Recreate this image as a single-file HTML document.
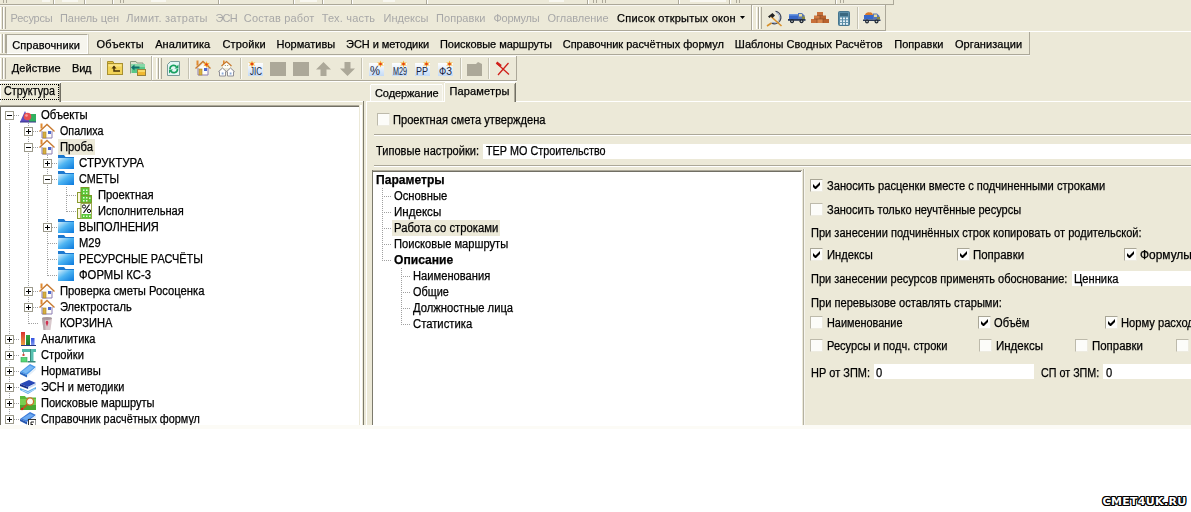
<!DOCTYPE html>
<html lang="ru"><head><meta charset="utf-8"><title>Параметры</title><style>
html,body{margin:0;padding:0}
body{width:1191px;height:512px;overflow:hidden;background:#fff;position:relative;font-family:"Liberation Sans",sans-serif}
#r{position:absolute;left:0;top:0;width:1191px;height:512px;overflow:hidden;background:#fff}
#r div,#r span,#r svg{position:absolute}
.t,.m,.b,.g,.mb{filter:grayscale(1);-webkit-text-stroke:.25px}
.t,.m,.b,.g{white-space:nowrap;height:16px;line-height:16px;color:#000}
.t{font-size:11px}
.g{font-size:11px;color:#ACA899;-webkit-text-stroke:0}
.m{font-size:12px}
.b{font-size:11px;font-weight:bold}
.mb{font-size:12px;font-weight:bold;white-space:nowrap;height:16px;line-height:16px;color:#000}
.wm{font-family:'DejaVu Sans',sans-serif;font-size:11px;font-weight:bold;white-space:nowrap;height:16px;line-height:16px;color:#fff;-webkit-text-stroke:0;text-shadow:-1px -1px 0 #000,1px -1px 0 #000,-1px 1px 0 #000,1px 1px 0 #000,0 -1px 0 #000,0 1px 0 #000,-1px 0 0 #000,1px 0 0 #000}
</style></head><body><div id="r"><div style="left:0px;top:0px;width:1191px;height:425px;background:#ECE9D8;"></div><div style="left:0px;top:425px;width:1191px;height:4px;background:#FCFBF6;"></div><div style="left:0px;top:4px;width:894px;height:1px;background:#ACA899;"></div><div style="left:893px;top:0px;width:1px;height:4px;background:#ACA899;"></div><div style="left:3px;top:0px;width:1px;height:3px;background:#ACA899;"></div><div style="left:6px;top:0px;width:1px;height:3px;background:#ACA899;"></div><div style="left:120px;top:0px;width:1px;height:3px;background:#ACA899;"></div><div style="left:123px;top:0px;width:1px;height:3px;background:#ACA899;"></div><div style="left:593px;top:0px;width:1px;height:3px;background:#ACA899;"></div><div style="left:596px;top:0px;width:1px;height:3px;background:#ACA899;"></div><div style="left:602px;top:0px;width:1px;height:3px;background:#ACA899;"></div><div style="left:605px;top:0px;width:1px;height:3px;background:#ACA899;"></div><div style="left:736px;top:0px;width:1px;height:3px;background:#ACA899;"></div><div style="left:739px;top:0px;width:1px;height:3px;background:#ACA899;"></div><div style="left:840px;top:0px;width:1px;height:3px;background:#ACA899;"></div><div style="left:843px;top:0px;width:1px;height:3px;background:#ACA899;"></div><div style="left:53px;top:0px;width:1px;height:4px;background:#ACA899;"></div><div style="left:54px;top:0px;width:1px;height:4px;background:#FFFFFF;"></div><div style="left:84px;top:0px;width:1px;height:4px;background:#ACA899;"></div><div style="left:85px;top:0px;width:1px;height:4px;background:#FFFFFF;"></div><div style="left:112px;top:0px;width:1px;height:4px;background:#ACA899;"></div><div style="left:113px;top:0px;width:1px;height:4px;background:#FFFFFF;"></div><div style="left:218px;top:0px;width:1px;height:4px;background:#ACA899;"></div><div style="left:219px;top:0px;width:1px;height:4px;background:#FFFFFF;"></div><div style="left:293px;top:0px;width:1px;height:4px;background:#ACA899;"></div><div style="left:294px;top:0px;width:1px;height:4px;background:#FFFFFF;"></div><div style="left:322px;top:0px;width:1px;height:4px;background:#ACA899;"></div><div style="left:323px;top:0px;width:1px;height:4px;background:#FFFFFF;"></div><div style="left:351px;top:0px;width:1px;height:4px;background:#ACA899;"></div><div style="left:352px;top:0px;width:1px;height:4px;background:#FFFFFF;"></div><div style="left:426px;top:0px;width:1px;height:4px;background:#ACA899;"></div><div style="left:427px;top:0px;width:1px;height:4px;background:#FFFFFF;"></div><div style="left:587px;top:0px;width:1px;height:4px;background:#ACA899;"></div><div style="left:588px;top:0px;width:1px;height:4px;background:#FFFFFF;"></div><div style="left:678px;top:0px;width:1px;height:4px;background:#ACA899;"></div><div style="left:679px;top:0px;width:1px;height:4px;background:#FFFFFF;"></div><div style="left:729px;top:0px;width:1px;height:4px;background:#ACA899;"></div><div style="left:730px;top:0px;width:1px;height:4px;background:#FFFFFF;"></div><div style="left:835px;top:0px;width:1px;height:4px;background:#ACA899;"></div><div style="left:836px;top:0px;width:1px;height:4px;background:#FFFFFF;"></div><div style="left:42px;top:0px;width:8px;height:2px;background:#F8F7F0;"></div><div style="left:62px;top:0px;width:16px;height:2px;background:#F8F7F0;"></div><div style="left:151px;top:0px;width:15px;height:2px;background:#F8F7F0;"></div><div style="left:300px;top:0px;width:17px;height:2px;background:#F8F7F0;"></div><div style="left:383px;top:0px;width:12px;height:2px;background:#F8F7F0;"></div><div style="left:549px;top:0px;width:15px;height:2px;background:#F8F7F0;"></div><div style="left:690px;top:0px;width:36px;height:2px;background:#F8F7F0;"></div><div style="left:0px;top:5px;width:751px;height:1px;background:#F8F7F1;"></div><div style="left:0px;top:30px;width:752px;height:1px;background:#ACA899;"></div><div style="left:751px;top:5px;width:1px;height:26px;background:#ACA899;"></div><div style="left:752px;top:5px;width:1px;height:25px;background:#FFFFFF;"></div><div style="left:752px;top:5px;width:133px;height:1px;background:#F8F7F1;"></div><div style="left:752px;top:30px;width:134px;height:1px;background:#ACA899;"></div><div style="left:885px;top:5px;width:1px;height:26px;background:#ACA899;"></div><div style="left:0px;top:31px;width:1191px;height:1px;background:#FFFFFF;"></div><div style="left:0px;top:7px;width:1px;height:22px;background:#FFFFFF;"></div><div style="left:2px;top:7px;width:1px;height:22px;background:#ACA899;"></div><div style="left:3px;top:7px;width:1px;height:22px;background:#FFFFFF;"></div><div style="left:5px;top:7px;width:1px;height:22px;background:#ACA899;"></div><span id="t0" class="g" style="left:10.5px;top:10px;letter-spacing:-0.196px;">Ресурсы</span><span id="t1" class="g" style="left:60px;top:10px;letter-spacing:-0.044px;">Панель цен</span><span id="t2" class="g" style="left:126.2px;top:10px;letter-spacing:0.264px;">Лимит. затраты</span><span id="t3" class="g" style="left:215.5px;top:10px;letter-spacing:-0.832px;">ЭСН</span><span id="t4" class="g" style="left:243.8px;top:10px;letter-spacing:0.146px;">Состав работ</span><span id="t5" class="g" style="left:321.7px;top:10px;letter-spacing:0.188px;">Тех. часть</span><span id="t6" class="g" style="left:383.5px;top:10px;letter-spacing:0.020px;">Индексы</span><span id="t7" class="g" style="left:436px;top:10px;letter-spacing:0.059px;">Поправки</span><span id="t8" class="g" style="left:493.5px;top:10px;letter-spacing:-0.296px;">Формулы</span><span id="t9" class="g" style="left:547.5px;top:10px;letter-spacing:-0.033px;">Оглавление</span><span id="t10" class="t" style="left:617.1px;top:10px;letter-spacing:0.227px;">Список открытых окон</span><svg style="left:740px;top:16px" width="5" height="3" viewBox="0 0 5 3"><path d="M0 0h5L2.5 3z" fill="#000"/></svg><div style="left:756px;top:7px;width:1px;height:22px;background:#FFFFFF;"></div><div style="left:758px;top:7px;width:1px;height:22px;background:#ACA899;"></div><div style="left:759px;top:7px;width:1px;height:22px;background:#FFFFFF;"></div><div style="left:761px;top:7px;width:1px;height:22px;background:#ACA899;"></div><div style="left:857px;top:7px;width:1px;height:22px;background:#C5C2B2;"></div><div style="left:858px;top:7px;width:1px;height:22px;background:#FAF9F3;"></div><svg style="left:766px;top:10px" width="17" height="17" viewBox="0 0 17 17"><path d="M9.500 1.200C14.500 2 16.500 7.500 13.500 11.500 11.500 14 8 14.500 5.500 13" fill="none" stroke="#3C4458" stroke-width="1.100"/><path d="M10 2.500C13.500 4 14.500 8 12.500 10.500 11 12.500 8.500 13 6.500 12.300" fill="none" stroke="#9FB4D8" stroke-width="1"/><path d="M5.500 13L1 16" stroke="#D8902A" stroke-width="1.600"/><path d="M5 6.500L15.500 16" stroke="#D8902A" stroke-width="1.600"/><path d="M2 6.500L6.500 3l2.500 2.500L6.500 8 5 6.500 3.500 8z" fill="#222"/></svg><svg style="left:788px;top:13px" width="18" height="11" viewBox="0 0 18 11"><rect x="1" y="1" width="9" height="5" fill="#3868C8"/><rect x="1" y="1" width="9" height="1.500" fill="#6C98E0"/><path d="M10 0h4l2.500 2.500V6H10z" fill="#5878B8"/><rect x="11" y="1" width="3" height="2.500" fill="#E8DC98"/><rect x="14" y="3.500" width="3" height="3" fill="#8A8A40"/><rect x="0" y="6" width="17.500" height="1.800" fill="#283858"/><circle cx="4" cy="8.200" r="2" fill="#202830"/><circle cx="13.500" cy="8.200" r="2" fill="#202830"/><circle cx="4" cy="8.200" r=".8" fill="#C8D0D8"/><circle cx="13.500" cy="8.200" r=".8" fill="#C8D0D8"/></svg><svg style="left:811px;top:12px" width="18" height="12" viewBox="0 0 18 12"><rect x="6" y="0" width="6" height="3.5" fill="#C8703A"/><rect x="3" y="3.5" width="6" height="3.5" fill="#D07A42"/><rect x="9" y="3.5" width="6" height="3.5" fill="#B9632F"/><rect x="0" y="7" width="6" height="4" fill="#C8703A"/><rect x="6" y="7" width="6" height="4" fill="#D9884E"/><rect x="12" y="7" width="6" height="4" fill="#B9632F"/><path d="M6 3.5h6M3 7h12M9 3.5v3.5M6 7v4M12 7v4" stroke="#8C4A22" stroke-width=".7"/></svg><svg style="left:838px;top:11px" width="12" height="15" viewBox="0 0 12 15"><rect x=".5" y=".5" width="11" height="14" rx="1" fill="#5B8EA8" stroke="#47768E"/><rect x="2" y="2" width="8" height="3" fill="#3A6880"/><g fill="#E4F0F6"><rect x="2" y="6.500" width="2" height="1.800"/><rect x="5" y="6.500" width="2" height="1.800"/><rect x="8" y="6.500" width="2" height="1.800"/><rect x="2" y="9.300" width="2" height="1.800"/><rect x="5" y="9.300" width="2" height="1.800"/><rect x="8" y="9.300" width="2" height="1.800"/><rect x="2" y="12" width="2" height="1.800"/><rect x="5" y="12" width="2" height="1.800"/><rect x="8" y="12" width="2" height="1.800"/></g></svg><svg style="left:863px;top:12px" width="18" height="12" viewBox="0 0 18 12"><path d="M2 3c.5-2 2.500-3 4.500-2.500C8 0 9.500 1 10 3z" fill="#D87828"/><rect x="1" y="3" width="9" height="4.500" fill="#3868C8"/><path d="M10 1.500h4l2.500 2.500V7.500H10z" fill="#5878B8"/><rect x="11" y="2.500" width="3" height="2.500" fill="#E8DC98"/><rect x="14" y="5" width="3" height="2.500" fill="#8A8A40"/><rect x="0" y="7.500" width="17.500" height="1.500" fill="#283858"/><circle cx="4" cy="9.500" r="2" fill="#202830"/><circle cx="13.500" cy="9.500" r="2" fill="#202830"/><circle cx="4" cy="9.500" r=".8" fill="#C8D0D8"/><circle cx="13.500" cy="9.500" r=".8" fill="#C8D0D8"/></svg><div style="left:0px;top:54px;width:1030px;height:1px;background:#ACA899;"></div><div style="left:1029px;top:32px;width:1px;height:23px;background:#ACA899;"></div><div style="left:0px;top:55px;width:1030px;height:1px;background:#F8F7F1;"></div><div style="left:0px;top:34px;width:1px;height:19px;background:#FFFFFF;"></div><div style="left:2px;top:34px;width:1px;height:19px;background:#ACA899;"></div><div style="left:3px;top:34px;width:1px;height:19px;background:#FFFFFF;"></div><div style="left:5px;top:34px;width:1px;height:19px;background:#ACA899;"></div><div style="left:6px;top:34px;width:82px;height:20px;background:#F6F5EE;box-sizing:border-box;border-top:1px solid #ACA899;border-left:1px solid #ACA899;border-right:1px solid #fff;border-bottom:1px solid #fff"></div><div style="left:88px;top:34px;width:1px;height:20px;background:#CFCCBD;"></div><span id="t11" class="t" style="left:12.3px;top:37px;letter-spacing:0.087px;">Справочники</span><span id="t12" class="t" style="left:96.5px;top:36px;letter-spacing:0.318px;">Объекты</span><span id="t13" class="t" style="left:155.2px;top:36px;letter-spacing:0.072px;">Аналитика</span><span id="t14" class="t" style="left:222.5px;top:36px;letter-spacing:0.125px;">Стройки</span><span id="t15" class="t" style="left:276.5px;top:36px;letter-spacing:0.026px;">Нормативы</span><span id="t16" class="t" style="left:346.1px;top:36px;letter-spacing:-0.056px;">ЭСН и методики</span><span id="t17" class="t" style="left:440px;top:36px;letter-spacing:-0.045px;">Поисковые маршруты</span><span id="t18" class="t" style="left:562.7px;top:36px;">Справочник расчётных формул</span><span id="t19" class="t" style="left:734.8px;top:36px;letter-spacing:0.013px;">Шаблоны Сводных Расчётов</span><span id="t20" class="t" style="left:894.2px;top:36px;letter-spacing:0.034px;">Поправки</span><span id="t21" class="t" style="left:955px;top:36px;letter-spacing:0.068px;">Организации</span><div style="left:0px;top:56px;width:151px;height:1px;background:#FFFFFF;"></div><div style="left:0px;top:80px;width:152px;height:1px;background:#ACA899;"></div><div style="left:151px;top:56px;width:1px;height:25px;background:#BAB7A8;"></div><div style="left:152px;top:56px;width:1px;height:24px;background:#FFFFFF;"></div><div style="left:152px;top:56px;width:364px;height:1px;background:#FFFFFF;"></div><div style="left:152px;top:80px;width:365px;height:1px;background:#ACA899;"></div><div style="left:516px;top:56px;width:1px;height:25px;background:#ACA899;"></div><div style="left:0px;top:81px;width:517px;height:1px;background:#FFFFFF;"></div><div style="left:0px;top:58px;width:1px;height:21px;background:#FFFFFF;"></div><div style="left:2px;top:58px;width:1px;height:21px;background:#ACA899;"></div><div style="left:3px;top:58px;width:1px;height:21px;background:#FFFFFF;"></div><div style="left:5px;top:58px;width:1px;height:21px;background:#ACA899;"></div><span id="t22" class="t" style="left:11.7px;top:60px;letter-spacing:0.080px;">Действие</span><span id="t23" class="t" style="left:72.1px;top:60px;letter-spacing:-0.302px;">Вид</span><div style="left:100px;top:58px;width:1px;height:21px;background:#C5C2B2;"></div><div style="left:101px;top:58px;width:1px;height:21px;background:#FAF9F3;"></div><div style="left:156px;top:58px;width:1px;height:21px;background:#FFFFFF;"></div><div style="left:158px;top:58px;width:1px;height:21px;background:#ACA899;"></div><div style="left:159px;top:58px;width:1px;height:21px;background:#FFFFFF;"></div><div style="left:161px;top:58px;width:1px;height:21px;background:#ACA899;"></div><div style="left:188px;top:58px;width:1px;height:21px;background:#C5C2B2;"></div><div style="left:189px;top:58px;width:1px;height:21px;background:#FAF9F3;"></div><div style="left:240px;top:58px;width:1px;height:21px;background:#C5C2B2;"></div><div style="left:241px;top:58px;width:1px;height:21px;background:#FAF9F3;"></div><div style="left:361px;top:58px;width:1px;height:21px;background:#C5C2B2;"></div><div style="left:362px;top:58px;width:1px;height:21px;background:#FAF9F3;"></div><div style="left:460px;top:58px;width:1px;height:21px;background:#C5C2B2;"></div><div style="left:461px;top:58px;width:1px;height:21px;background:#FAF9F3;"></div><div style="left:488px;top:58px;width:1px;height:21px;background:#C5C2B2;"></div><div style="left:489px;top:58px;width:1px;height:21px;background:#FAF9F3;"></div><svg style="left:107px;top:61px" width="16" height="15" viewBox="0 0 16 15"><path d="M.5 2.500V.5h5.500l1 2z" fill="#E8C848" stroke="#A89030" stroke-width="1"/><rect x=".5" y="2.500" width="15" height="11" fill="#F2D458" stroke="#A89030" stroke-width="1"/><rect x="1.500" y="3.500" width="13" height="2" fill="#F8E488"/><path d="M13 10H7V5.500" fill="none" stroke="#4A3408" stroke-width="1.500"/><path d="M4.500 7.500L7 4.500l2.500 3z" fill="#4A3408"/></svg><svg style="left:130px;top:61px" width="16" height="15" viewBox="0 0 16 15"><path d="M.5 12.500V.5h5.500l1 1.500h6v2" fill="#DCE4D0" stroke="#8A9A80" stroke-width="1"/><rect x="1.500" y="3" width="13.500" height="9" fill="#58C888"/><rect x="1.500" y="3" width="13.500" height="3" fill="#88D8A8"/><path d="M9.500 6.500H3.500" stroke="#0E706C" stroke-width="2"/><path d="M1 6.500L4.500 3.500v6z" fill="#0E706C"/><rect x="7.500" y="8.500" width="8" height="6" fill="#F0B830" stroke="#98803A" stroke-width="1"/><rect x="8" y="9" width="7" height="2" fill="#F8D868"/></svg><svg style="left:166px;top:61px" width="15" height="15" viewBox="0 0 15 15"><path d="M4.500.5H13.500V14.500H1.500V3.500z" fill="#E4F6F4" stroke="#7A9A98" stroke-width="1"/><path d="M4 8A3.600 3.600 0 0 1 10.500 5.800" fill="none" stroke="#18A060" stroke-width="1.700"/><path d="M11.500 8A3.600 3.600 0 0 1 5 10.200" fill="none" stroke="#18A060" stroke-width="1.700"/><path d="M12.500 3.500v4h-4z" fill="#18A060"/><path d="M3 12.500v-4h4z" fill="#18A060"/></svg><svg style="left:195px;top:60px" width="17" height="17" viewBox="0 0 17 17"><rect x="1.500" y="0.500" width="2" height="5" fill="#E08A30"/><path d="M3 8.500v6.500h10V8.500L8 4z" fill="#FEFDF8"/><path d="M3 8v7h10V8" fill="none" stroke="#8C7CB4" stroke-width="1"/><path d="M.5 8.500L8 1.500l7.500 7" fill="none" stroke="#C87A30" stroke-width="1.400"/><rect x="4" y="9" width="3" height="6" fill="#D8B040" stroke="#A8842A" stroke-width=".6"/><rect x="9" y="8" width="3" height="3" fill="#4A68D0"/><g transform="translate(11.500 4.500)"><path d="M0-3.500L.9-1.200 3.300-1.800 1.700 0 3.300 1.800.9 1.200 0 3.500-.9 1.200-3.300 1.800-1.700 0-3.300-1.800-.9-1.200z" fill="#F7B030"/><circle r="1.300" fill="#E4401C"/></g></svg><svg style="left:218px;top:60px" width="17" height="17" viewBox="0 0 17 17"><rect x="5" y=".5" width="1.600" height="3.500" fill="#E08A30"/><path d="M5 8V5l3.500-3 3.500 3v3z" fill="#FEFDF8"/><path d="M3.500 6L8.500 1.500 13.500 6" fill="none" stroke="#C87A30" stroke-width="1.300"/><circle cx="7.300" cy="5.500" r=".6" fill="#886"/><circle cx="9.700" cy="5.500" r=".6" fill="#886"/><path d="M1.500 11.500V16h6v-4.500L4.500 8.500z" fill="#fff"/><path d="M.3 11.800L4.500 8l4.200 3.800M1.500 11.500V16h6v-4.500" fill="none" stroke="#8E8E96" stroke-width="1"/><path d="M9.500 11.500V16h6v-4.500L12.500 8.500z" fill="#fff"/><path d="M8.300 11.800L12.500 8l4.200 3.800M9.500 11.500V16h6v-4.500" fill="none" stroke="#8E8E96" stroke-width="1"/><rect x="3.700" y="12.500" width="1.800" height="2" fill="#88A8D8"/><rect x="11.700" y="12.500" width="1.800" height="2" fill="#88A8D8"/></svg><svg style="left:247px;top:60px" width="17" height="17" viewBox="0 0 17 17"><rect x="1" y="3" width="15" height="13" fill="url(#dg)"/><text x="3" y="14.500" font-family="Liberation Sans,sans-serif" font-size="10" textLength="12" lengthAdjust="spacingAndGlyphs" fill="#141E40">JIC</text><g transform="translate(5 4)"><path d="M0-3.500L.9-1.200 3.300-1.800 1.700 0 3.300 1.800.9 1.200 0 3.500-.9 1.200-3.300 1.800-1.700 0-3.300-1.800-.9-1.200z" fill="#F7B030"/><circle r="1.300" fill="#E4401C"/></g></svg><div style="left:270px;top:62px;width:16px;height:14px;background:#ACA899;"></div><div style="left:293px;top:62px;width:16px;height:14px;background:#ACA899;"></div><svg style="left:315px;top:61px" width="17" height="16" viewBox="0 0 17 16"><path d="M8.500 1L16 8.500h-4.500V15h-6V8.500H1z" fill="#ACA899"/></svg><svg style="left:339px;top:61px" width="17" height="16" viewBox="0 0 17 16"><path d="M8.500 15L16 7.500h-4.500V1h-6v6.500H1z" fill="#ACA899"/></svg><svg style="left:368px;top:60px" width="17" height="17" viewBox="0 0 17 17"><defs><linearGradient id="dg" x1="0" y1="0" x2="0" y2="1"><stop offset="0" stop-color="#FFFFFF"/><stop offset="1" stop-color="#C4DAF6"/></linearGradient></defs><rect x="1" y="3" width="15" height="13" fill="url(#dg)"/><text x="2" y="14.500" font-family="Liberation Sans,sans-serif" font-size="12" textLength="10" lengthAdjust="spacingAndGlyphs" fill="#141E40">%</text><g transform="translate(12.500 4)"><path d="M0-3.500L.9-1.200 3.300-1.800 1.700 0 3.300 1.800.9 1.200 0 3.500-.9 1.200-3.300 1.800-1.700 0-3.300-1.800-.9-1.200z" fill="#F7B030"/><circle r="1.300" fill="#E4401C"/></g></svg><svg style="left:391px;top:60px" width="17" height="17" viewBox="0 0 17 17"><defs><linearGradient id="dg" x1="0" y1="0" x2="0" y2="1"><stop offset="0" stop-color="#FFFFFF"/><stop offset="1" stop-color="#C4DAF6"/></linearGradient></defs><rect x="1" y="3" width="15" height="13" fill="url(#dg)"/><text x="2" y="14.500" font-family="Liberation Sans,sans-serif" font-size="11" textLength="14" lengthAdjust="spacingAndGlyphs" fill="#141E40">М29</text><g transform="translate(12.500 4)"><path d="M0-3.500L.9-1.200 3.300-1.800 1.700 0 3.300 1.800.9 1.200 0 3.500-.9 1.200-3.300 1.800-1.700 0-3.300-1.800-.9-1.200z" fill="#F7B030"/><circle r="1.300" fill="#E4401C"/></g></svg><svg style="left:414px;top:60px" width="17" height="17" viewBox="0 0 17 17"><defs><linearGradient id="dg" x1="0" y1="0" x2="0" y2="1"><stop offset="0" stop-color="#FFFFFF"/><stop offset="1" stop-color="#C4DAF6"/></linearGradient></defs><rect x="1" y="3" width="15" height="13" fill="url(#dg)"/><text x="2" y="14.500" font-family="Liberation Sans,sans-serif" font-size="11" textLength="12" lengthAdjust="spacingAndGlyphs" fill="#141E40">РР</text><g transform="translate(12.500 4)"><path d="M0-3.500L.9-1.200 3.300-1.800 1.700 0 3.300 1.800.9 1.200 0 3.500-.9 1.200-3.300 1.800-1.700 0-3.300-1.800-.9-1.200z" fill="#F7B030"/><circle r="1.300" fill="#E4401C"/></g></svg><svg style="left:437px;top:60px" width="17" height="17" viewBox="0 0 17 17"><defs><linearGradient id="dg" x1="0" y1="0" x2="0" y2="1"><stop offset="0" stop-color="#FFFFFF"/><stop offset="1" stop-color="#C4DAF6"/></linearGradient></defs><rect x="1" y="3" width="15" height="13" fill="url(#dg)"/><text x="2" y="14.500" font-family="Liberation Sans,sans-serif" font-size="11" textLength="13" lengthAdjust="spacingAndGlyphs" fill="#141E40">ФЗ</text><g transform="translate(12.500 4)"><path d="M0-3.500L.9-1.200 3.300-1.800 1.700 0 3.300 1.800.9 1.200 0 3.500-.9 1.200-3.300 1.800-1.700 0-3.300-1.800-.9-1.200z" fill="#F7B030"/><circle r="1.300" fill="#E4401C"/></g></svg><svg style="left:466px;top:61px" width="17" height="16" viewBox="0 0 17 16"><path d="M1 3h9l2-2 4 2v12H1z" fill="#ACA899"/></svg><svg style="left:495px;top:61px" width="16" height="16" viewBox="0 0 16 16"><path d="M2 2.500l12 11M13.500 2L3 14" stroke="#D0201A" stroke-width="1.300" fill="none"/><path d="M1.500 1.500l4.500 3.500" stroke="#D0201A" stroke-width="2.400"/></svg><div style="left:0px;top:82px;width:61px;height:1px;background:#FFFFFF;"></div><div style="left:0px;top:82px;width:1px;height:20px;background:#FFFFFF;"></div><div style="left:60px;top:83px;width:1px;height:19px;background:#716F64;"></div><div style="left:59px;top:84px;width:1px;height:18px;background:#ACA899;"></div><div style="left:-2px;top:84px;width:61px;height:16px;background:transparent;box-sizing:border-box;border:1px dotted #000"></div><span id="t24" class="m" style="left:3.5px;top:83px;transform:scaleX(0.8940);transform-origin:0 0;">Структура</span><div style="left:61px;top:101px;width:303px;height:1px;background:#FFFFFF;"></div><div style="left:0px;top:105px;width:363px;height:321px;background:#FFFFFF;"></div><div style="left:0px;top:105px;width:359px;height:1px;background:#ACA899;"></div><div style="left:0px;top:106px;width:359px;height:1px;background:#716F64;"></div><div style="left:0px;top:106px;width:1px;height:319px;background:#716F64;"></div><div style="left:359px;top:105px;width:4px;height:320px;background:#ECE9D8;"></div><div style="left:360px;top:105px;width:1px;height:320px;background:#FFFFFF;"></div><div style="left:361px;top:105px;width:1px;height:320px;background:#FFFFFF;"></div><div style="left:363px;top:101px;width:1px;height:324px;background:#7C7A6C;"></div><div style="left:9px;top:123px;width:1px;height:296px;background:repeating-linear-gradient(180deg,#A0A0A0 0 1px,transparent 1px 2px)"></div><div style="left:28px;top:123px;width:1px;height:201px;background:repeating-linear-gradient(180deg,#A0A0A0 0 1px,transparent 1px 2px)"></div><div style="left:47px;top:155px;width:1px;height:121px;background:repeating-linear-gradient(180deg,#A0A0A0 0 1px,transparent 1px 2px)"></div><div style="left:66px;top:187px;width:1px;height:25px;background:repeating-linear-gradient(180deg,#A0A0A0 0 1px,transparent 1px 2px)"></div><div style="left:10px;top:115px;width:10px;height:1px;background:repeating-linear-gradient(90deg,#A0A0A0 0 1px,transparent 1px 2px)"></div><svg style="left:20px;top:107px" width="16" height="16" viewBox="0 0 16 16"><path d="M0 15L5 4l5 11z" fill="#5C50C0"/><rect x="9" y="7" width="7" height="8" fill="#30B060"/><circle cx="7.500" cy="9.500" r="3.800" fill="#E85050"/><circle cx="6.500" cy="8.500" r="1.300" fill="#F8A0A0"/><path d="M0 15h16" stroke="#38308A" stroke-width="1"/></svg><svg style="left:5px;top:111px" width="9" height="9" viewBox="0 0 9 9"><rect x=".5" y=".5" width="8" height="8" fill="#fff" stroke="#9C9A8C"/><path d="M2 4.500h5" stroke="#000" stroke-width="1"/></svg><span id="t25" class="m" style="left:41px;top:107px;transform:scaleX(0.9434);transform-origin:0 0;">Объекты</span><div style="left:29px;top:131px;width:10px;height:1px;background:repeating-linear-gradient(90deg,#A0A0A0 0 1px,transparent 1px 2px)"></div><svg style="left:39px;top:123px" width="16" height="16" viewBox="0 0 16 16"><rect x="1.500" y="0.500" width="2" height="5" fill="#E08A30"/><path d="M3 8.500v6.500h10V8.500L8 4z" fill="#FEFDF8"/><path d="M3 8v7h10V8" fill="none" stroke="#8C7CB4" stroke-width="1"/><path d="M.5 8.500L8 1.500l7.500 7" fill="none" stroke="#C87A30" stroke-width="1.400"/><rect x="4" y="9" width="3" height="6" fill="#D8B040" stroke="#A8842A" stroke-width=".6"/><rect x="9" y="8" width="3" height="3" fill="#4A68D0"/></svg><svg style="left:24px;top:127px" width="9" height="9" viewBox="0 0 9 9"><rect x=".5" y=".5" width="8" height="8" fill="#fff" stroke="#9C9A8C"/><path d="M2 4.500h5M4.500 2v5" stroke="#000" stroke-width="1"/></svg><span id="t26" class="m" style="left:60px;top:123px;transform:scaleX(0.8923);transform-origin:0 0;">Опалиха</span><div style="left:29px;top:147px;width:10px;height:1px;background:repeating-linear-gradient(90deg,#A0A0A0 0 1px,transparent 1px 2px)"></div><div style="left:58px;top:139px;width:37px;height:16px;background:#ECE9D8;"></div><svg style="left:39px;top:139px" width="16" height="16" viewBox="0 0 16 16"><rect x="1.500" y="0.500" width="2" height="5" fill="#E08A30"/><path d="M3 8.500v6.500h10V8.500L8 4z" fill="#FEFDF8"/><path d="M3 8v7h10V8" fill="none" stroke="#8C7CB4" stroke-width="1"/><path d="M.5 8.500L8 1.500l7.500 7" fill="none" stroke="#C87A30" stroke-width="1.400"/><rect x="4" y="9" width="3" height="6" fill="#D8B040" stroke="#A8842A" stroke-width=".6"/><rect x="9" y="8" width="3" height="3" fill="#4A68D0"/></svg><svg style="left:24px;top:143px" width="9" height="9" viewBox="0 0 9 9"><rect x=".5" y=".5" width="8" height="8" fill="#fff" stroke="#9C9A8C"/><path d="M2 4.500h5" stroke="#000" stroke-width="1"/></svg><span id="t27" class="m" style="left:60px;top:139px;transform:scaleX(0.9362);transform-origin:0 0;">Проба</span><div style="left:48px;top:163px;width:10px;height:1px;background:repeating-linear-gradient(90deg,#A0A0A0 0 1px,transparent 1px 2px)"></div><svg style="left:58px;top:155px" width="16" height="16" viewBox="0 0 16 16"><defs><linearGradient id="fg" x1="0" y1="0" x2="1" y2="1"><stop offset="0" stop-color="#D8F0FC"/><stop offset=".45" stop-color="#4DB4F2"/><stop offset="1" stop-color="#0A78DC"/></linearGradient></defs><path d="M0 0h6l1.500 2H16v12H0z" fill="#1B78D0"/><path d="M0 3h16v11H0z" fill="url(#fg)"/></svg><svg style="left:43px;top:159px" width="9" height="9" viewBox="0 0 9 9"><rect x=".5" y=".5" width="8" height="8" fill="#fff" stroke="#9C9A8C"/><path d="M2 4.500h5M4.500 2v5" stroke="#000" stroke-width="1"/></svg><span id="t28" class="m" style="left:79px;top:155px;transform:scaleX(0.9543);transform-origin:0 0;">СТРУКТУРА</span><div style="left:48px;top:179px;width:10px;height:1px;background:repeating-linear-gradient(90deg,#A0A0A0 0 1px,transparent 1px 2px)"></div><svg style="left:58px;top:171px" width="16" height="16" viewBox="0 0 16 16"><defs><linearGradient id="fg" x1="0" y1="0" x2="1" y2="1"><stop offset="0" stop-color="#D8F0FC"/><stop offset=".45" stop-color="#4DB4F2"/><stop offset="1" stop-color="#0A78DC"/></linearGradient></defs><path d="M0 0h6l1.500 2H16v12H0z" fill="#1B78D0"/><path d="M0 3h16v11H0z" fill="url(#fg)"/></svg><svg style="left:43px;top:175px" width="9" height="9" viewBox="0 0 9 9"><rect x=".5" y=".5" width="8" height="8" fill="#fff" stroke="#9C9A8C"/><path d="M2 4.500h5" stroke="#000" stroke-width="1"/></svg><span id="t29" class="m" style="left:79px;top:171px;transform:scaleX(0.8992);transform-origin:0 0;">СМЕТЫ</span><div style="left:67px;top:195px;width:10px;height:1px;background:repeating-linear-gradient(90deg,#A0A0A0 0 1px,transparent 1px 2px)"></div><svg style="left:77px;top:187px" width="16" height="16" viewBox="0 0 16 16"><rect x=".5" y="5.500" width="3.500" height="10" fill="#FBF8E0" stroke="#8A9A30" stroke-width="1"/><rect x="4" y=".5" width="8" height="15" fill="#58C838" stroke="#7A9A28" stroke-width="1"/><rect x="11" y="8.500" width="3.500" height="7" fill="#58C838" stroke="#7A9A28" stroke-width="1"/><g fill="#E8FBD8"><rect x="6" y="2.500" width="1.500" height="1.500"/><rect x="9" y="2.500" width="1.500" height="1.500"/><rect x="6" y="5.500" width="1.500" height="1.500"/><rect x="9" y="5.500" width="1.500" height="1.500"/><rect x="6" y="10" width="1.500" height="1.500"/><rect x="9" y="10" width="1.500" height="1.500"/><rect x="6" y="13" width="1.500" height="1.500"/><rect x="9" y="13" width="1.500" height="1.500"/><rect x="12" y="10.500" width="1.500" height="1.500"/></g><path d="M4 8.500h8" stroke="#7A9A28" stroke-width="1"/></svg><span id="t30" class="m" style="left:98px;top:187px;transform:scaleX(0.9355);transform-origin:0 0;">Проектная</span><div style="left:67px;top:211px;width:10px;height:1px;background:repeating-linear-gradient(90deg,#A0A0A0 0 1px,transparent 1px 2px)"></div><svg style="left:77px;top:203px" width="16" height="16" viewBox="0 0 16 16"><rect x=".5" y="5.500" width="3.500" height="10" fill="#FBF8E0" stroke="#8A9A30" stroke-width="1"/><rect x="4" y=".5" width="10.500" height="15" fill="#fff" stroke="#9AAA50" stroke-width="1"/><rect x="4.500" y="11" width="9.500" height="4.500" fill="#58C838"/><path d="M12.500 1.500l-6 8.500" stroke="#111" stroke-width="1.200"/><circle cx="7" cy="3.500" r="1.600" fill="none" stroke="#111" stroke-width="1"/><circle cx="12" cy="8" r="1.600" fill="none" stroke="#111" stroke-width="1"/><g fill="#E8FBD8"><rect x="6" y="12.500" width="1.500" height="1.500"/><rect x="9" y="12.500" width="1.500" height="1.500"/><rect x="12" y="12.500" width="1.500" height="1.500"/></g></svg><span id="t31" class="m" style="left:98px;top:203px;transform:scaleX(0.9269);transform-origin:0 0;">Исполнительная</span><div style="left:48px;top:227px;width:10px;height:1px;background:repeating-linear-gradient(90deg,#A0A0A0 0 1px,transparent 1px 2px)"></div><svg style="left:58px;top:219px" width="16" height="16" viewBox="0 0 16 16"><defs><linearGradient id="fg" x1="0" y1="0" x2="1" y2="1"><stop offset="0" stop-color="#D8F0FC"/><stop offset=".45" stop-color="#4DB4F2"/><stop offset="1" stop-color="#0A78DC"/></linearGradient></defs><path d="M0 0h6l1.500 2H16v12H0z" fill="#1B78D0"/><path d="M0 3h16v11H0z" fill="url(#fg)"/></svg><svg style="left:43px;top:223px" width="9" height="9" viewBox="0 0 9 9"><rect x=".5" y=".5" width="8" height="8" fill="#fff" stroke="#9C9A8C"/><path d="M2 4.500h5M4.500 2v5" stroke="#000" stroke-width="1"/></svg><span id="t32" class="m" style="left:79px;top:219px;transform:scaleX(0.9177);transform-origin:0 0;">ВЫПОЛНЕНИЯ</span><div style="left:48px;top:243px;width:10px;height:1px;background:repeating-linear-gradient(90deg,#A0A0A0 0 1px,transparent 1px 2px)"></div><svg style="left:58px;top:235px" width="16" height="16" viewBox="0 0 16 16"><defs><linearGradient id="fg" x1="0" y1="0" x2="1" y2="1"><stop offset="0" stop-color="#D8F0FC"/><stop offset=".45" stop-color="#4DB4F2"/><stop offset="1" stop-color="#0A78DC"/></linearGradient></defs><path d="M0 0h6l1.500 2H16v12H0z" fill="#1B78D0"/><path d="M0 3h16v11H0z" fill="url(#fg)"/></svg><span id="t33" class="m" style="left:79px;top:235px;transform:scaleX(0.9296);transform-origin:0 0;">М29</span><div style="left:48px;top:259px;width:10px;height:1px;background:repeating-linear-gradient(90deg,#A0A0A0 0 1px,transparent 1px 2px)"></div><svg style="left:58px;top:251px" width="16" height="16" viewBox="0 0 16 16"><defs><linearGradient id="fg" x1="0" y1="0" x2="1" y2="1"><stop offset="0" stop-color="#D8F0FC"/><stop offset=".45" stop-color="#4DB4F2"/><stop offset="1" stop-color="#0A78DC"/></linearGradient></defs><path d="M0 0h6l1.500 2H16v12H0z" fill="#1B78D0"/><path d="M0 3h16v11H0z" fill="url(#fg)"/></svg><span id="t34" class="m" style="left:79px;top:251px;transform:scaleX(0.9087);transform-origin:0 0;">РЕСУРСНЫЕ РАСЧЁТЫ</span><div style="left:48px;top:275px;width:10px;height:1px;background:repeating-linear-gradient(90deg,#A0A0A0 0 1px,transparent 1px 2px)"></div><svg style="left:58px;top:267px" width="16" height="16" viewBox="0 0 16 16"><defs><linearGradient id="fg" x1="0" y1="0" x2="1" y2="1"><stop offset="0" stop-color="#D8F0FC"/><stop offset=".45" stop-color="#4DB4F2"/><stop offset="1" stop-color="#0A78DC"/></linearGradient></defs><path d="M0 0h6l1.500 2H16v12H0z" fill="#1B78D0"/><path d="M0 3h16v11H0z" fill="url(#fg)"/></svg><span id="t35" class="m" style="left:79px;top:267px;transform:scaleX(0.9414);transform-origin:0 0;">ФОРМЫ КС-3</span><div style="left:29px;top:291px;width:10px;height:1px;background:repeating-linear-gradient(90deg,#A0A0A0 0 1px,transparent 1px 2px)"></div><svg style="left:39px;top:283px" width="16" height="16" viewBox="0 0 16 16"><rect x="1.500" y="0.500" width="2" height="5" fill="#E08A30"/><path d="M3 8.500v6.500h10V8.500L8 4z" fill="#FEFDF8"/><path d="M3 8v7h10V8" fill="none" stroke="#8C7CB4" stroke-width="1"/><path d="M.5 8.500L8 1.500l7.500 7" fill="none" stroke="#C87A30" stroke-width="1.400"/><rect x="4" y="9" width="3" height="6" fill="#D8B040" stroke="#A8842A" stroke-width=".6"/><rect x="9" y="8" width="3" height="3" fill="#4A68D0"/></svg><svg style="left:24px;top:287px" width="9" height="9" viewBox="0 0 9 9"><rect x=".5" y=".5" width="8" height="8" fill="#fff" stroke="#9C9A8C"/><path d="M2 4.500h5M4.500 2v5" stroke="#000" stroke-width="1"/></svg><span id="t36" class="m" style="left:60px;top:283px;transform:scaleX(0.9368);transform-origin:0 0;">Проверка сметы Росоценка</span><div style="left:29px;top:307px;width:10px;height:1px;background:repeating-linear-gradient(90deg,#A0A0A0 0 1px,transparent 1px 2px)"></div><svg style="left:39px;top:299px" width="16" height="16" viewBox="0 0 16 16"><rect x="1.500" y="0.500" width="2" height="5" fill="#E08A30"/><path d="M3 8.500v6.500h10V8.500L8 4z" fill="#FEFDF8"/><path d="M3 8v7h10V8" fill="none" stroke="#8C7CB4" stroke-width="1"/><path d="M.5 8.500L8 1.500l7.500 7" fill="none" stroke="#C87A30" stroke-width="1.400"/><rect x="4" y="9" width="3" height="6" fill="#D8B040" stroke="#A8842A" stroke-width=".6"/><rect x="9" y="8" width="3" height="3" fill="#4A68D0"/></svg><svg style="left:24px;top:303px" width="9" height="9" viewBox="0 0 9 9"><rect x=".5" y=".5" width="8" height="8" fill="#fff" stroke="#9C9A8C"/><path d="M2 4.500h5M4.500 2v5" stroke="#000" stroke-width="1"/></svg><span id="t37" class="m" style="left:60px;top:299px;transform:scaleX(0.9261);transform-origin:0 0;">Электросталь</span><div style="left:29px;top:323px;width:10px;height:1px;background:repeating-linear-gradient(90deg,#A0A0A0 0 1px,transparent 1px 2px)"></div><svg style="left:39px;top:315px" width="16" height="16" viewBox="0 0 16 16"><path d="M3 3.500h10l-1.500 11.500h-7z" fill="#D8C8CC"/><path d="M3 3.500h3l.5 11.500h-2z" fill="#B8A8AE"/><ellipse cx="8" cy="3.500" rx="5" ry="1.400" fill="#A8989E"/><path d="M6.500 7.500h3l-1.500 4z" fill="#D03050"/><circle cx="8" cy="7" r="1.200" fill="#D03050"/></svg><span id="t38" class="m" style="left:60px;top:315px;transform:scaleX(0.9277);transform-origin:0 0;">КОРЗИНА</span><div style="left:10px;top:339px;width:10px;height:1px;background:repeating-linear-gradient(90deg,#A0A0A0 0 1px,transparent 1px 2px)"></div><svg style="left:20px;top:331px" width="16" height="16" viewBox="0 0 16 16"><defs><linearGradient id="ga" x1="0" y1="0" x2="0" y2="1"><stop offset="0" stop-color="#D83030"/><stop offset="1" stop-color="#E8A040"/></linearGradient><linearGradient id="gb" x1="0" y1="0" x2="0" y2="1"><stop offset="0" stop-color="#30A840"/><stop offset="1" stop-color="#207830"/></linearGradient><linearGradient id="gc" x1="0" y1="0" x2="0" y2="1"><stop offset="0" stop-color="#3050E0"/><stop offset="1" stop-color="#8098F0"/></linearGradient></defs><rect x="1" y="1" width="4" height="13" fill="url(#ga)"/><rect x="6" y="4" width="4" height="10" fill="url(#gb)"/><rect x="11" y="7" width="3.500" height="7" fill="url(#gc)"/><path d="M1 14.500h15" stroke="#283888" stroke-width="1"/></svg><svg style="left:5px;top:335px" width="9" height="9" viewBox="0 0 9 9"><rect x=".5" y=".5" width="8" height="8" fill="#fff" stroke="#9C9A8C"/><path d="M2 4.500h5M4.500 2v5" stroke="#000" stroke-width="1"/></svg><span id="t39" class="m" style="left:41px;top:331px;transform:scaleX(0.9174);transform-origin:0 0;">Аналитика</span><div style="left:10px;top:355px;width:10px;height:1px;background:repeating-linear-gradient(90deg,#A0A0A0 0 1px,transparent 1px 2px)"></div><svg style="left:20px;top:347px" width="16" height="16" viewBox="0 0 16 16"><rect x="2" y="2" width="14" height="3" fill="#50B8A8"/><rect x="10" y="2" width="3.500" height="12" fill="#58C0B0"/><rect x="10" y="2" width="1" height="12" fill="#388878"/><rect x="7.500" y="14" width="8" height="1.500" fill="#388878"/><rect x="1" y="10.500" width="6" height="4.500" fill="#58D878" stroke="#30A050" stroke-width=".6"/><rect x="2.500" y="7" width="2" height="2" fill="#D04838"/><path d="M3.500 5v2" stroke="#777" stroke-width=".8"/></svg><svg style="left:5px;top:351px" width="9" height="9" viewBox="0 0 9 9"><rect x=".5" y=".5" width="8" height="8" fill="#fff" stroke="#9C9A8C"/><path d="M2 4.500h5M4.500 2v5" stroke="#000" stroke-width="1"/></svg><span id="t40" class="m" style="left:41px;top:347px;transform:scaleX(0.9291);transform-origin:0 0;">Стройки</span><div style="left:10px;top:371px;width:10px;height:1px;background:repeating-linear-gradient(90deg,#A0A0A0 0 1px,transparent 1px 2px)"></div><svg style="left:20px;top:363px" width="16" height="16" viewBox="0 0 16 16"><path d="M0 9L10 1l6 3-9 8z" fill="#4A98E8"/><path d="M2 8.500L10 2.500l4 2-8 6z" fill="#78B8F4"/><path d="M0 9l7 3v2.500L0 11z" fill="#2868C0"/><path d="M7 12l9-8v2.500l-9 8z" fill="#E4EEF8"/></svg><svg style="left:5px;top:367px" width="9" height="9" viewBox="0 0 9 9"><rect x=".5" y=".5" width="8" height="8" fill="#fff" stroke="#9C9A8C"/><path d="M2 4.500h5M4.500 2v5" stroke="#000" stroke-width="1"/></svg><span id="t41" class="m" style="left:41px;top:363px;transform:scaleX(0.9346);transform-origin:0 0;">Нормативы</span><div style="left:10px;top:387px;width:10px;height:1px;background:repeating-linear-gradient(90deg,#A0A0A0 0 1px,transparent 1px 2px)"></div><svg style="left:20px;top:379px" width="16" height="16" viewBox="0 0 16 16"><path d="M0 5L9 1l7 3-8 4z" fill="#2848B8"/><path d="M0 5l8 3v2L0 7z" fill="#182C88"/><path d="M8 8l8-4v2l-8 4z" fill="#C8D8F0"/><path d="M0 9l8 3 8-4v2l-8 5-8-4z" fill="#58A8E8"/><path d="M2 11l6 2.500 7-3.500" fill="none" stroke="#D8ECFA" stroke-width=".8"/></svg><svg style="left:5px;top:383px" width="9" height="9" viewBox="0 0 9 9"><rect x=".5" y=".5" width="8" height="8" fill="#fff" stroke="#9C9A8C"/><path d="M2 4.500h5M4.500 2v5" stroke="#000" stroke-width="1"/></svg><span id="t42" class="m" style="left:41px;top:379px;transform:scaleX(0.9124);transform-origin:0 0;">ЭСН и методики</span><div style="left:10px;top:403px;width:10px;height:1px;background:repeating-linear-gradient(90deg,#A0A0A0 0 1px,transparent 1px 2px)"></div><svg style="left:20px;top:395px" width="16" height="16" viewBox="0 0 16 16"><path d="M0 1h5l1 1.500h10V15H0z" fill="#58B838"/><path d="M0 4h16v11H0z" fill="#78D050"/><path d="M0 10h16v5H0z" fill="#48A830"/><circle cx="10" cy="6.500" r="3.600" fill="#FAFAF0" stroke="#C87028" stroke-width="1.300"/><path d="M7 9.500l-4.500 4.500" stroke="#B86020" stroke-width="1.800"/><circle cx="2" cy="14" r="1.200" fill="#D02020"/></svg><svg style="left:5px;top:399px" width="9" height="9" viewBox="0 0 9 9"><rect x=".5" y=".5" width="8" height="8" fill="#fff" stroke="#9C9A8C"/><path d="M2 4.500h5M4.500 2v5" stroke="#000" stroke-width="1"/></svg><span id="t43" class="m" style="left:41px;top:395px;transform:scaleX(0.9231);transform-origin:0 0;">Поисковые маршруты</span><div style="left:10px;top:419px;width:10px;height:1px;background:repeating-linear-gradient(90deg,#A0A0A0 0 1px,transparent 1px 2px)"></div><svg style="left:20px;top:411px" width="16" height="16" viewBox="0 0 16 16"><path d="M0 8L10 1l6 3-9 7z" fill="#3A78D8"/><path d="M2 7.500L10 2.500l4 2-8 5z" fill="#6AA8F0"/><path d="M0 8l7 3v2.500L0 10z" fill="#2858B0"/><path d="M7 11l9-7v2.500l-9 7z" fill="#E4EEF8"/><rect x="8.500" y="8.500" width="7.500" height="8" fill="#fff" stroke="#222" stroke-width=".9"/><path d="M11 16v-5h3M11 13.500h2" stroke="#222" stroke-width="1" fill="none"/></svg><svg style="left:5px;top:415px" width="9" height="9" viewBox="0 0 9 9"><rect x=".5" y=".5" width="8" height="8" fill="#fff" stroke="#9C9A8C"/><path d="M2 4.500h5M4.500 2v5" stroke="#000" stroke-width="1"/></svg><span id="t44" class="m" style="left:41px;top:411px;transform:scaleX(0.9033);transform-origin:0 0;">Справочник расчётных формул</span><div style="left:0px;top:425px;width:364px;height:4px;background:#FCFBF6;"></div><div style="left:366px;top:101px;width:825px;height:1px;background:#FFFFFF;"></div><div style="left:366px;top:101px;width:1px;height:324px;background:#FFFFFF;"></div><div style="left:370px;top:84px;width:73px;height:17px;background:#F1EFE4;"></div><div style="left:371px;top:84px;width:71px;height:1px;background:#FFFFFF;"></div><div style="left:370px;top:85px;width:1px;height:16px;background:#FFFFFF;"></div><div style="left:442px;top:85px;width:1px;height:16px;background:#FBFAF5;"></div><span id="t45" class="t" style="left:375px;top:85px;letter-spacing:-0.080px;">Содержание</span><div style="left:444px;top:82px;width:72px;height:20px;background:#ECE9D8;"></div><div style="left:445px;top:82px;width:70px;height:1px;background:#FFFFFF;"></div><div style="left:444px;top:83px;width:1px;height:19px;background:#FFFFFF;"></div><div style="left:515px;top:83px;width:1px;height:19px;background:#716F64;"></div><div style="left:514px;top:84px;width:1px;height:18px;background:#ACA899;"></div><span id="t46" class="t" style="left:449.5px;top:83px;letter-spacing:0.151px;">Параметры</span><div style="left:377px;top:113px;width:13px;height:13px;background:#FCFCF9;box-sizing:border-box;border:1px solid #BDBAAB;border-right-color:#EDEBE0;border-bottom-color:#EDEBE0"></div><span id="t47" class="m" style="left:393px;top:112px;transform:scaleX(0.9262);transform-origin:0 0;">Проектная смета утверждена</span><div style="left:374px;top:134px;width:817px;height:1px;background:#ACA899;"></div><div style="left:374px;top:135px;width:817px;height:1px;background:#FFFFFF;"></div><span id="t48" class="m" style="left:375.5px;top:143px;transform:scaleX(0.9211);transform-origin:0 0;">Типовые настройки:</span><div style="left:483px;top:144px;width:708px;height:15px;background:#FFFFFF;"></div><span id="t49" class="m" style="left:485.9px;top:143px;transform:scaleX(0.9002);transform-origin:0 0;">ТЕР МО Строительство</span><div style="left:374px;top:165px;width:817px;height:1px;background:#ACA899;"></div><div style="left:374px;top:166px;width:817px;height:1px;background:#FFFFFF;"></div><div style="left:372px;top:170px;width:430px;height:256px;background:#FFFFFF;"></div><div style="left:372px;top:170px;width:430px;height:1px;background:#ACA899;"></div><div style="left:372px;top:171px;width:429px;height:1px;background:#716F64;"></div><div style="left:372px;top:170px;width:1px;height:255px;background:#7C7A6C;"></div><span id="t50" class="mb" style="left:375.5px;top:172px;transform:scaleX(1.0065);transform-origin:0 0;">Параметры</span><div style="left:382px;top:188px;width:1px;height:73px;background:repeating-linear-gradient(180deg,#A0A0A0 0 1px,transparent 1px 2px)"></div><div style="left:401px;top:268px;width:1px;height:57px;background:repeating-linear-gradient(180deg,#A0A0A0 0 1px,transparent 1px 2px)"></div><div style="left:382px;top:196px;width:10px;height:1px;background:repeating-linear-gradient(90deg,#A0A0A0 0 1px,transparent 1px 2px)"></div><span id="t51" class="m" style="left:393.7px;top:188px;transform:scaleX(0.9344);transform-origin:0 0;">Основные</span><div style="left:382px;top:212px;width:10px;height:1px;background:repeating-linear-gradient(90deg,#A0A0A0 0 1px,transparent 1px 2px)"></div><span id="t52" class="m" style="left:393.7px;top:204px;transform:scaleX(0.9645);transform-origin:0 0;">Индексы</span><div style="left:382px;top:228px;width:10px;height:1px;background:repeating-linear-gradient(90deg,#A0A0A0 0 1px,transparent 1px 2px)"></div><div style="left:392px;top:220px;width:108px;height:16px;background:#ECE9D8;"></div><span id="t53" class="m" style="left:393.7px;top:220px;transform:scaleX(0.9391);transform-origin:0 0;">Работа со строками</span><div style="left:382px;top:244px;width:10px;height:1px;background:repeating-linear-gradient(90deg,#A0A0A0 0 1px,transparent 1px 2px)"></div><span id="t54" class="m" style="left:393.7px;top:236px;transform:scaleX(0.9288);transform-origin:0 0;">Поисковые маршруты</span><div style="left:382px;top:260px;width:10px;height:1px;background:repeating-linear-gradient(90deg,#A0A0A0 0 1px,transparent 1px 2px)"></div><span id="t55" class="mb" style="left:393.7px;top:252px;transform:scaleX(1.0074);transform-origin:0 0;">Описание</span><div style="left:401px;top:276px;width:10px;height:1px;background:repeating-linear-gradient(90deg,#A0A0A0 0 1px,transparent 1px 2px)"></div><span id="t56" class="m" style="left:412.7px;top:268px;transform:scaleX(0.9299);transform-origin:0 0;">Наименования</span><div style="left:401px;top:292px;width:10px;height:1px;background:repeating-linear-gradient(90deg,#A0A0A0 0 1px,transparent 1px 2px)"></div><span id="t57" class="m" style="left:412.7px;top:284px;transform:scaleX(0.9070);transform-origin:0 0;">Общие</span><div style="left:401px;top:308px;width:10px;height:1px;background:repeating-linear-gradient(90deg,#A0A0A0 0 1px,transparent 1px 2px)"></div><span id="t58" class="m" style="left:412.7px;top:300px;transform:scaleX(0.9354);transform-origin:0 0;">Должностные лица</span><div style="left:401px;top:324px;width:10px;height:1px;background:repeating-linear-gradient(90deg,#A0A0A0 0 1px,transparent 1px 2px)"></div><span id="t59" class="m" style="left:412.7px;top:316px;transform:scaleX(0.9392);transform-origin:0 0;">Статистика</span><div style="left:803px;top:169px;width:1px;height:256px;background:#B4B1A2;"></div><div style="left:804px;top:169px;width:1px;height:256px;background:#F6F5EE;"></div><div style="left:810px;top:179px;width:13px;height:13px;background:#FCFCF9;box-sizing:border-box;border:1px solid #A9A696;border-right-color:#EDEBE0;border-bottom-color:#EDEBE0"></div><svg style="left:813px;top:182px" width="7" height="7" viewBox="0 0 7 7"><path d="M0 2v3L2.500 7.500 7 3V0L2.500 4.500z" fill="#000"/></svg><span id="t60" class="m" style="left:826.8px;top:178px;transform:scaleX(0.9274);transform-origin:0 0;">Заносить расценки вместе с подчиненными строками</span><div style="left:810px;top:203px;width:13px;height:13px;background:#FCFCF9;box-sizing:border-box;border:1px solid #BDBAAB;border-right-color:#EDEBE0;border-bottom-color:#EDEBE0"></div><span id="t61" class="m" style="left:826.8px;top:202px;transform:scaleX(0.9185);transform-origin:0 0;">Заносить только неучтённые ресурсы</span><span id="t62" class="m" style="left:810.5px;top:225px;transform:scaleX(0.9209);transform-origin:0 0;">При занесении подчинённых строк копировать от родительской:</span><div style="left:810px;top:248px;width:13px;height:13px;background:#FCFCF9;box-sizing:border-box;border:1px solid #A9A696;border-right-color:#EDEBE0;border-bottom-color:#EDEBE0"></div><svg style="left:813px;top:251px" width="7" height="7" viewBox="0 0 7 7"><path d="M0 2v3L2.500 7.500 7 3V0L2.500 4.500z" fill="#000"/></svg><span id="t63" class="m" style="left:826.8px;top:247px;transform:scaleX(0.9338);transform-origin:0 0;">Индексы</span><div style="left:957px;top:248px;width:13px;height:13px;background:#FCFCF9;box-sizing:border-box;border:1px solid #A9A696;border-right-color:#EDEBE0;border-bottom-color:#EDEBE0"></div><svg style="left:960px;top:251px" width="7" height="7" viewBox="0 0 7 7"><path d="M0 2v3L2.500 7.500 7 3V0L2.500 4.500z" fill="#000"/></svg><span id="t64" class="m" style="left:972.7px;top:247px;transform:scaleX(0.9554);transform-origin:0 0;">Поправки</span><div style="left:1124px;top:248px;width:13px;height:13px;background:#FCFCF9;box-sizing:border-box;border:1px solid #A9A696;border-right-color:#EDEBE0;border-bottom-color:#EDEBE0"></div><svg style="left:1127px;top:251px" width="7" height="7" viewBox="0 0 7 7"><path d="M0 2v3L2.500 7.500 7 3V0L2.500 4.500z" fill="#000"/></svg><span id="t65" class="m" style="left:1140.1px;top:247px;transform:scaleX(0.9939);transform-origin:0 0;">Формулы</span><span id="t66" class="m" style="left:810.5px;top:271px;transform:scaleX(0.9156);transform-origin:0 0;">При занесении ресурсов применять обоснование:</span><div style="left:1072px;top:271px;width:119px;height:15px;background:#FFFFFF;"></div><span id="t67" class="m" style="left:1073.5px;top:271px;transform:scaleX(0.9329);transform-origin:0 0;">Ценника</span><span id="t68" class="m" style="left:810.5px;top:295px;transform:scaleX(0.9255);transform-origin:0 0;">При перевызове оставлять старыми:</span><div style="left:810px;top:316px;width:13px;height:13px;background:#FCFCF9;box-sizing:border-box;border:1px solid #BDBAAB;border-right-color:#EDEBE0;border-bottom-color:#EDEBE0"></div><span id="t69" class="m" style="left:826.8px;top:315px;transform:scaleX(0.9076);transform-origin:0 0;">Наименование</span><div style="left:978px;top:316px;width:13px;height:13px;background:#FCFCF9;box-sizing:border-box;border:1px solid #A9A696;border-right-color:#EDEBE0;border-bottom-color:#EDEBE0"></div><svg style="left:981px;top:319px" width="7" height="7" viewBox="0 0 7 7"><path d="M0 2v3L2.500 7.500 7 3V0L2.500 4.500z" fill="#000"/></svg><span id="t70" class="m" style="left:994.1px;top:315px;transform:scaleX(0.9259);transform-origin:0 0;">Объём</span><div style="left:1105px;top:316px;width:13px;height:13px;background:#FCFCF9;box-sizing:border-box;border:1px solid #A9A696;border-right-color:#EDEBE0;border-bottom-color:#EDEBE0"></div><svg style="left:1108px;top:319px" width="7" height="7" viewBox="0 0 7 7"><path d="M0 2v3L2.500 7.500 7 3V0L2.500 4.500z" fill="#000"/></svg><span id="t71" class="m" style="left:1121.1px;top:315px;transform:scaleX(0.9300);transform-origin:0 0;">Норму расхода</span><div style="left:810px;top:339px;width:13px;height:13px;background:#FCFCF9;box-sizing:border-box;border:1px solid #BDBAAB;border-right-color:#EDEBE0;border-bottom-color:#EDEBE0"></div><span id="t72" class="m" style="left:826.8px;top:338px;transform:scaleX(0.9239);transform-origin:0 0;">Ресурсы и подч. строки</span><div style="left:979px;top:339px;width:13px;height:13px;background:#FCFCF9;box-sizing:border-box;border:1px solid #BDBAAB;border-right-color:#EDEBE0;border-bottom-color:#EDEBE0"></div><span id="t73" class="m" style="left:995.9px;top:338px;transform:scaleX(0.9584);transform-origin:0 0;">Индексы</span><div style="left:1075px;top:339px;width:13px;height:13px;background:#FCFCF9;box-sizing:border-box;border:1px solid #BDBAAB;border-right-color:#EDEBE0;border-bottom-color:#EDEBE0"></div><span id="t74" class="m" style="left:1091.8px;top:338px;transform:scaleX(0.9535);transform-origin:0 0;">Поправки</span><div style="left:1176px;top:339px;width:13px;height:13px;background:#FCFCF9;box-sizing:border-box;border:1px solid #BDBAAB;border-right-color:#EDEBE0;border-bottom-color:#EDEBE0"></div><span id="t75" class="m" style="left:810.5px;top:365px;transform:scaleX(0.9154);transform-origin:0 0;">НР от ЗПМ:</span><div style="left:874px;top:364px;width:160px;height:15px;background:#FFFFFF;"></div><span id="t76" class="m" style="left:876px;top:365px;transform:scaleX(0.9300);transform-origin:0 0;">0</span><span id="t77" class="m" style="left:1040.7px;top:365px;transform:scaleX(0.8958);transform-origin:0 0;">СП от ЗПМ:</span><div style="left:1103px;top:364px;width:88px;height:15px;background:#FFFFFF;"></div><span id="t78" class="m" style="left:1106px;top:365px;transform:scaleX(0.9300);transform-origin:0 0;">0</span><span id="t79" class="wm" style="left:1102.5px;top:494px;letter-spacing:0.327px;">CMET4UK.RU</span></div></body></html>
